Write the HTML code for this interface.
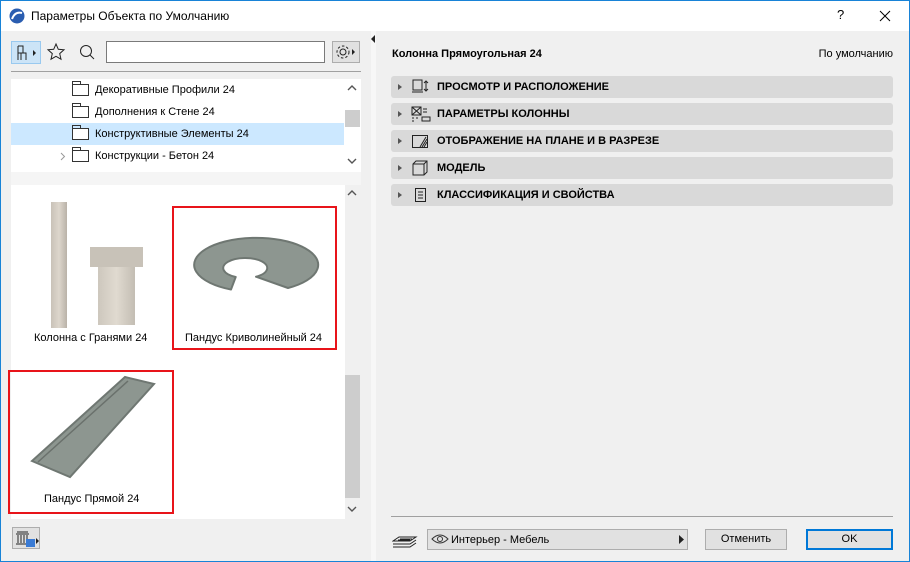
<!DOCTYPE html>
<html><head><meta charset="utf-8"><style>
*{box-sizing:border-box;margin:0;padding:0}
body{width:910px;height:562px;overflow:hidden;background:#f0f0f0;font-family:"Liberation Sans","Noto Sans CJK SC",sans-serif;font-size:11px;color:#000;position:relative}
.a{position:absolute}
.win{left:0;top:0;width:910px;height:562px;border:1px solid #1883d7}
.title{left:1px;top:1px;width:908px;height:30px;background:#fff}
.sec{left:391px;width:502px;height:22px;background:#d9d9d9;border-radius:3px;font-weight:bold;font-size:11px;line-height:22px}
.sec .tri{position:absolute;left:7px;top:8px;border-left:4px solid #555;border-top:3px solid transparent;border-bottom:3px solid transparent}
.sec span{position:absolute;left:46px}
.sec svg{position:absolute;left:20px;top:3px}
.row{left:11px;width:333px;height:22px;line-height:22px;font-size:11px}
.fold{position:absolute;left:61px;top:5px;width:17px;height:12px;border:1px solid #333;background:#fff}
.fold:before{content:"";position:absolute;left:-1px;top:-4px;width:7px;height:3px;border:1px solid #333;border-bottom:none}
.row span{position:absolute;left:84px}
.btn{background:#e1e1e1;border:1px solid #adadad;text-align:center;line-height:19px;font-size:11px}
</style></head><body>
<div class="a win"></div>
<div class="a title"></div>
<svg class="a" style="left:9px;top:8px" width="16" height="16"><circle cx="8" cy="8" r="7.5" fill="#2a5db0"/><path d="M3 11 Q6 3 13 5" stroke="#fff" stroke-width="2" fill="none"/></svg>
<div class="a" style="left:31px;top:9px;font-size:12px">Параметры Объекта по Умолчанию</div>
<div class="a" style="left:837px;top:7px;font-size:13px">?</div>
<svg class="a" style="left:879px;top:10px" width="12" height="12"><path d="M1 1L11 11M11 1L1 11" stroke="#000" stroke-width="1"/></svg>

<div class="a" style="left:11px;top:41px;width:30px;height:23px;background:#cce4f7;border:1px solid #99c9ef"></div>
<svg class="a" style="left:15px;top:44px" width="24" height="18"><path d="M3 2h5v7h3v7M3 2v14M3 9h8M6 9v7" stroke="#222" fill="none"/><path d="M18 6l3 3-3 3z" fill="#222"/></svg>
<svg class="a" style="left:46px;top:42px" width="20" height="20"><path d="M10 2l2.3 5.3 5.7.5-4.3 3.8 1.3 5.6L10 14.3 5 17.2l1.3-5.6L2 7.8l5.7-.5z" stroke="#222" fill="none"/></svg>
<svg class="a" style="left:78px;top:43px" width="18" height="18"><circle cx="8" cy="8" r="5.5" stroke="#222" fill="none"/><path d="M12 12l4 4" stroke="#222"/></svg>
<div class="a" style="left:106px;top:41px;width:219px;height:22px;background:#fff;border:1px solid #7a7a7a"></div>
<div class="a" style="left:332px;top:41px;width:28px;height:22px;background:#e1e1e1;border:1px solid #adadad"></div>
<svg class="a" style="left:335px;top:44px" width="24" height="16"><circle cx="8" cy="8" r="3" stroke="#222" fill="none"/><circle cx="8" cy="8" r="6" stroke="#222" fill="none" stroke-dasharray="2.5 2"/><path d="M17 5l3 3-3 3z" fill="#222"/></svg>
<div class="a" style="left:11px;top:71px;width:350px;height:1px;background:#a0a0a0"></div>

<div class="a" style="left:11px;top:79px;width:350px;height:93px;background:#fff"></div>
<div class="a" style="left:345px;top:110px;width:15px;height:17px;background:#cdcdcd"></div>
<svg class="a" style="left:347px;top:84px" width="10" height="8"><path d="M1 6l4-4 4 4" stroke="#555" fill="none" stroke-width="1.4"/></svg>
<svg class="a" style="left:347px;top:157px" width="10" height="8"><path d="M1 2l4 4 4-4" stroke="#555" fill="none" stroke-width="1.4"/></svg>
<div class="a row" style="top:79px"><div class="fold"></div><span>Декоративные Профили 24</span></div>
<div class="a row" style="top:101px"><div class="fold"></div><span>Дополнения к Стене 24</span></div>
<div class="a row" style="top:123px;background:#cce8ff"><div class="fold"></div><span>Конструктивные Элементы 24</span></div>
<div class="a row" style="top:145px"><svg style="position:absolute;left:49px;top:7px" width="6" height="9"><path d="M1 1l3.5 3.5L1 8" stroke="#999" fill="none"/></svg><div class="fold"></div><span>Конструкции - Бетон 24</span></div>
<div class="a" style="left:11px;top:172px;width:350px;height:13px;background:#f5f5f5"></div>

<div class="a" style="left:11px;top:185px;width:334px;height:334px;background:#fff"></div>
<div class="a" style="left:345px;top:375px;width:15px;height:123px;background:#cdcdcd"></div>
<svg class="a" style="left:347px;top:189px" width="10" height="8"><path d="M1 6l4-4 4 4" stroke="#555" fill="none" stroke-width="1.4"/></svg>
<svg class="a" style="left:347px;top:505px" width="10" height="8"><path d="M1 2l4 4 4-4" stroke="#555" fill="none" stroke-width="1.4"/></svg>
<div class="a" style="left:51px;top:202px;width:16px;height:126px;background:linear-gradient(90deg,#c9c2b8,#ddd6cc,#b9b2a8)"></div>
<div class="a" style="left:90px;top:247px;width:53px;height:20px;background:#c8c2b8"></div>
<div class="a" style="left:98px;top:267px;width:37px;height:58px;background:linear-gradient(90deg,#cdc7bd,#e0dad0,#c3bdb3)"></div>
<div class="a" style="left:34px;top:332px">Колонна с Гранями 24</div>
<div class="a" style="left:172px;top:206px;width:165px;height:144px;border:2px solid #e8141a"></div>
<svg class="a" style="left:190px;top:230px" width="135" height="75"><path d="M41 59.5 A62 27 0 1 1 98 58 L66 46.7 A22 10 0 1 0 45.7 47 Z" fill="#8d9690" stroke="#6f7772" stroke-width="2" stroke-linejoin="round"/></svg>
<div class="a" style="left:185px;top:332px">Пандус Криволинейный 24</div>
<div class="a" style="left:8px;top:370px;width:166px;height:144px;border:2px solid #e8141a"></div>
<svg class="a" style="left:30px;top:374px" width="130" height="105"><path d="M2 87 L95 3 L124 10 L40 103 Z" fill="#8d9690" stroke="#6f7772" stroke-width="2"/><path d="M8 88 L98 7" stroke="#6a716c" stroke-width="1.5"/></svg>
<div class="a" style="left:44px;top:493px">Пандус Прямой 24</div>

<div class="a btn" style="left:12px;top:527px;width:28px;height:22px"></div>
<svg class="a" style="left:14px;top:530px" width="26" height="18"><path d="M2 4h13M3 2h11M4 5v8M7 5v8M10 5v8M13 5v8M2 14h11" stroke="#222" fill="none"/><rect x="12" y="9" width="9" height="8" fill="#3a7bd5"/><path d="M22 8l3 3-3 3z" fill="#222"/></svg>

<div class="a" style="left:371px;top:31px;width:5px;height:530px;background:#f7f7f7"></div>
<svg class="a" style="left:371px;top:35px" width="5" height="8"><path d="M4 0v8L0 4z" fill="#222"/></svg>

<div class="a" style="left:392px;top:48px;font-weight:bold">Колонна Прямоугольная 24</div>
<div class="a" style="right:17px;top:48px">По умолчанию</div>
<div class="a sec" style="top:76px"><i class="tri"></i><svg width="22" height="16"><rect x="2" y="1" width="9" height="10" stroke="#222" fill="none"/><path d="M1 13h11M13 4l2-2 2 2M15 2v10M13 10l2 2 2-2" stroke="#222" fill="none"/></svg><span>ПРОСМОТР И РАСПОЛОЖЕНИЕ</span></div>
<div class="a sec" style="top:103px"><i class="tri"></i><svg width="22" height="16"><rect x="1" y="1" width="9" height="8" stroke="#222" fill="none"/><path d="M1 1l9 8M10 1L1 9M12 3h4M12 6h4M11 11h8v4h-8zM1 12h2M5 12h2M1 15h2" stroke="#222" fill="none"/></svg><span>ПАРАМЕТРЫ КОЛОННЫ</span></div>
<div class="a sec" style="top:130px"><i class="tri"></i><svg width="22" height="16"><rect x="1.5" y="2.5" width="15" height="12" stroke="#222" fill="none"/><path d="M9 14L15 4M11 14L16 6M13 14l3-5" stroke="#222"/></svg><span>ОТОБРАЖЕНИЕ НА ПЛАНЕ И В РАЗРЕЗЕ</span></div>
<div class="a sec" style="top:157px"><i class="tri"></i><svg width="22" height="16"><path d="M2 4l3-3h11v11l-3 3H2zM2 4h11v11M13 4l3-3" stroke="#222" fill="none"/></svg><span>МОДЕЛЬ</span></div>
<div class="a sec" style="top:184px"><i class="tri"></i><svg width="22" height="16"><rect x="4.5" y="1.5" width="10" height="13" stroke="#222" fill="none"/><path d="M7 5h5M7 8h5M7 11h5" stroke="#222"/></svg><span>КЛАССИФИКАЦИЯ И СВОЙСТВА</span></div>

<div class="a" style="left:391px;top:516px;width:502px;height:1px;background:#a0a0a0"></div>
<svg class="a" style="left:392px;top:530px" width="26" height="18"><path d="M1 11l6-4h17l-6 4zM1 14h17l6-4M1 17h17l6-4M8 9h12M6 10h12" stroke="#222" fill="none"/></svg>
<div class="a btn" style="left:427px;top:529px;width:261px;height:21px;text-align:left"></div>
<svg class="a" style="left:431px;top:533px" width="18" height="12"><path d="M1 6Q9-2 17 6Q9 14 1 6z" stroke="#333" fill="none"/><circle cx="9" cy="6" r="2.5" stroke="#333" fill="none"/></svg>
<div class="a" style="left:451px;top:534px">Интерьер - Мебель</div>
<svg class="a" style="left:679px;top:535px" width="5" height="9"><path d="M0 0l5 4.5L0 9z" fill="#222"/></svg>
<div class="a btn" style="left:705px;top:529px;width:82px;height:21px">Отменить</div>
<div class="a btn" style="left:806px;top:529px;width:87px;height:21px;border:2px solid #0078d7;line-height:17px">OK</div>
</body></html>
